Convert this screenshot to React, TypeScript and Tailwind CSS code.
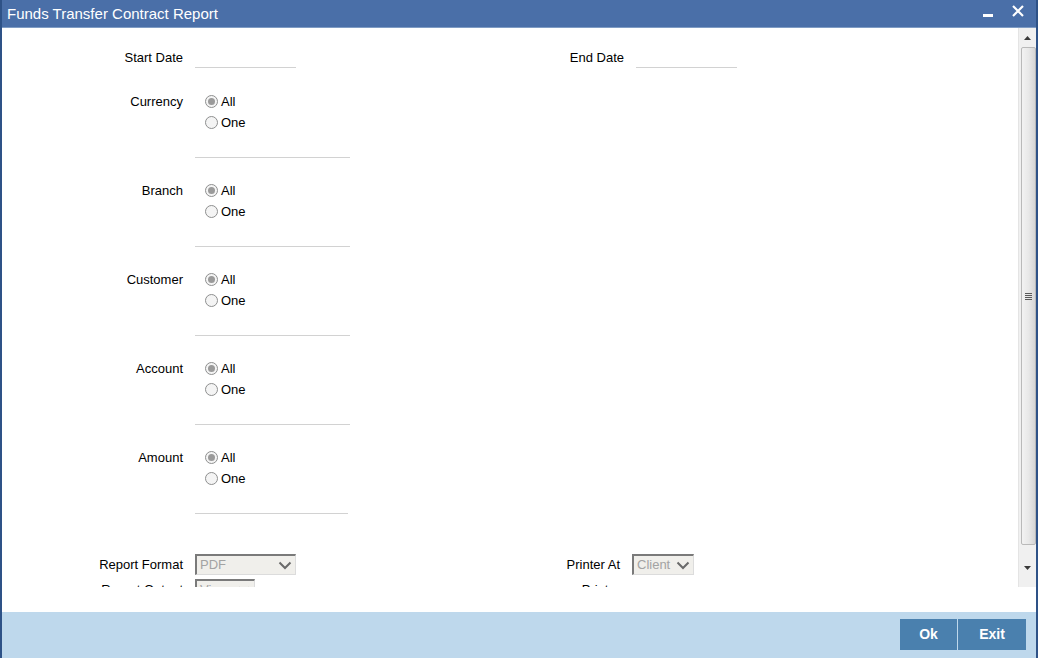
import React from "react";

const font = { fontFamily: '"Liberation Sans", Arial, sans-serif' };

function Radio({ checked, label }: { checked?: boolean; label: string }) {
  return (
    <div className="flex items-center h-[21px]">
      <span className="ml-[10px] w-[13px] h-[13px] rounded-full border border-[#8e8f8f] bg-[#f4f4f4] flex items-center justify-center">
        {checked && <span className="w-[7px] h-[7px] rounded-full bg-[#9a9a9a]" />}
      </span>
      <span className="ml-[3px] text-[13px] text-black">{label}</span>
    </div>
  );
}

function Select({ value, w }: { value: string; w: string }) {
  return (
    <div className={`${w} h-[21px] bg-[#f0efeb] border-l-2 border-t-2 border-[#7a7a7a] border-r border-b border-r-[#dcdcdc] border-b-[#dcdcdc] flex items-center justify-between pl-[3px] pr-[3px]`}>
      <span className="text-[13px] text-[#a3a3a3]">{value}</span>
      <svg width="14" height="9" viewBox="0 0 14 9">
        <path d="M1.5 1.5 L7 7 L12.5 1.5" fill="none" stroke="#6a6a6a" strokeWidth="2" />
      </svg>
    </div>
  );
}

function Block({ label, last }: { label: string; last?: boolean }) {
  return (
    <div className="flex mt-[21px] first:mt-[22px]">
      <div className="w-[181px] mt-[1px] text-right text-[13px] leading-[21px] text-black">{label}</div>
      <div className="ml-[12px] flex flex-col pt-[1px]">
        <Radio checked label="All" />
        <Radio label="One" />
        <div className={`${last ? "w-[153px]" : "w-[155px]"} h-[25px] border-b border-[#d2d2d2]`} />
      </div>
    </div>
  );
}

function Scrollbar() {
  return (
    <div className="w-[18px] bg-[#f0f0f0] border-l border-[#e4e4e4] flex flex-col items-center">
      <div className="h-[19px] w-full flex items-center justify-center pt-[1px]">
        <svg width="7" height="4" viewBox="0 0 7 4"><path d="M3.5 0 L7 4 L0 4 Z" fill="#3a3a3a" /></svg>
      </div>
      <div className="flex-1 w-[15px] mr-[-1px] rounded-[2px] border border-[#b9b9b9] bg-gradient-to-r from-[#f2f2f2] via-[#e8e8e8] to-[#d6d6d6] flex items-center justify-center">
        <div className="flex flex-col gap-[1px]">
          <span className="block w-[7px] h-[1px] bg-[#5a5a5a]" />
          <span className="block w-[7px] h-[1px] bg-[#5a5a5a]" />
          <span className="block w-[7px] h-[1px] bg-[#5a5a5a]" />
          <span className="block w-[7px] h-[1px] bg-[#5a5a5a]" />
        </div>
      </div>
      <div className="h-[42px] w-full flex items-start justify-center pt-[21px]">
        <svg width="7" height="4" viewBox="0 0 7 4"><path d="M0 0 L7 0 L3.5 4 Z" fill="#3a3a3a" /></svg>
      </div>
    </div>
  );
}

export default function App() {
  return (
    <div className="w-[1038px] h-[658px] flex flex-col bg-white border-l-2 border-r-2 border-[#2e5287] overflow-hidden" style={font}>
      <div className="h-[28px] bg-[#4a6fa8] flex items-center justify-between pl-[5px] pr-[12px] border-b border-[#7f9cc4]">
        <span className="text-white text-[15px] leading-none">Funds Transfer Contract Report</span>
        <div className="flex items-center gap-[19px]">
          <span className="block w-[10px] h-[3px] bg-white mt-[4px]" />
          <svg width="12" height="12" viewBox="0 0 12 12" className="mb-[6px]">
            <path d="M1 1 L11 11 M11 1 L1 11" stroke="white" strokeWidth="2.2" />
          </svg>
        </div>
      </div>

      <div className="h-[559px] flex">
        <div className="flex-1 overflow-hidden pt-[19px]">
          <div className="flex">
            <div className="flex items-center h-[21px]">
              <div className="w-[181px] text-right text-[13px] text-black">Start Date</div>
              <div className="ml-[12px] w-[101px] h-[21px] border-b border-[#d2d2d2]" />
            </div>
            <div className="flex items-center h-[21px] ml-[70px]">
              <div className="w-[258px] text-right text-[13px] text-black">End Date</div>
              <div className="ml-[12px] w-[101px] h-[21px] border-b border-[#d2d2d2]" />
            </div>
          </div>

          <div className="flex flex-col">
            <Block label="Currency" />
            <Block label="Branch" />
            <Block label="Customer" />
            <Block label="Account" />
            <Block label="Amount" last />
          </div>

          <div className="flex mt-[40px]">
            <div className="flex flex-col gap-[4px]">
              <div className="flex items-center h-[21px]">
                <div className="w-[181px] text-right text-[13px] text-black">Report Format</div>
                <div className="ml-[12px]"><Select value="PDF" w="w-[101px]" /></div>
              </div>
              <div className="flex items-center h-[21px]">
                <div className="w-[181px] text-right text-[13px] text-black">Report Output</div>
                <div className="ml-[12px]"><Select value="View" w="w-[60px]" /></div>
              </div>
            </div>
            <div className="flex flex-col gap-[4px] ml-[66px]">
              <div className="flex items-center h-[21px]">
                <div className="w-[258px] text-right text-[13px] text-black">Printer At</div>
                <div className="ml-[12px]"><Select value="Client" w="w-[62px]" /></div>
              </div>
              <div className="flex items-center h-[21px]">
                <div className="w-[258px] text-right text-[13px] text-black">Printer</div>
              </div>
            </div>
          </div>
        </div>
        <Scrollbar />
      </div>

      <div className="h-[25px] bg-white" />

      <div className="flex-1 bg-[#bed8ec] flex items-start justify-end pr-[10px] pt-[7px]">
        <button className="w-[57px] h-[31px] bg-[#4a80ae] text-white text-[14px] font-bold">Ok</button>
        <button className="w-[68px] h-[31px] ml-[1px] bg-[#4a80ae] text-white text-[14px] font-bold">Exit</button>
      </div>
    </div>
  );
}
